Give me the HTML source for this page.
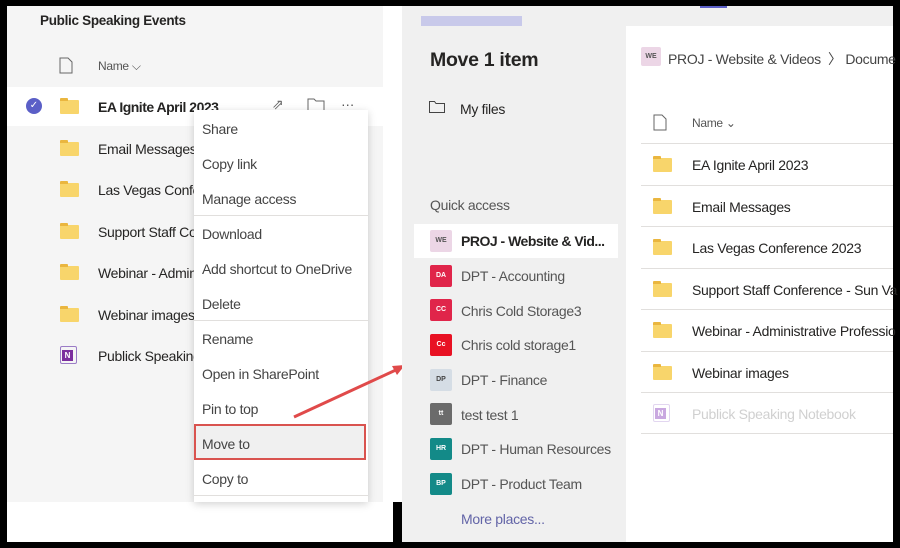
<!DOCTYPE html>
<html><head><style>
*{margin:0;padding:0;box-sizing:border-box}
body{width:900px;height:548px;background:#000;position:relative;overflow:hidden;font-family:"Liberation Sans",sans-serif;color:#252423}
.a{position:absolute}
.t{position:absolute;font-size:14px;white-space:nowrap;line-height:16px;letter-spacing:-0.3px}
.fold{position:absolute;width:19px;height:14px;background:#f8d56b;border-radius:1px}
.fold:before{content:"";position:absolute;left:0;top:-2px;width:8px;height:3px;background:#eab63f;border-radius:1px 1px 0 0}
.ic{position:absolute;width:22px;height:22px;border-radius:2px;font-size:7px;color:#fff;text-align:center;line-height:22px;font-weight:bold}
.mi{position:absolute;left:8px;font-size:14px;color:#444;letter-spacing:-0.3px}
.hl{position:absolute;height:1px;background:#e1dfdd}
</style></head><body>
<div class="a" style="left:7px;top:6px;width:376px;height:496px;background:#f5f5f5"></div>
<div class="a" style="left:7px;top:502px;width:386px;height:40px;background:#fff"></div>
<div class="a" style="left:383px;top:6px;width:19px;height:496px;background:#fff"></div>
<div class="t" style="left:40px;top:13px;font-weight:bold;font-size:13.5px">Public Speaking Events</div>
<svg class="a" style="left:59px;top:57px" width="14" height="17"><path d="M1 1h8l4 4v11H1z" fill="none" stroke="#666"/></svg>
<div class="t" style="left:98px;top:58px;font-size:12px;color:#555">Name ⌵</div>
<div class="a" style="left:7px;top:87px;width:376px;height:39px;background:#fff"></div>
<div class="a" style="left:26px;top:98px;width:16px;height:16px;border-radius:50%;background:#5b5fc7;color:#fff;font-size:10px;text-align:center;line-height:16px">✓</div>
<div class="fold" style="left:60px;top:100px"></div>
<div class="t" style="left:98px;top:99px;font-weight:bold;letter-spacing:-0.5px">EA Ignite April 2023</div>
<div class="t" style="left:272px;top:96px;color:#666">⇗</div>
<svg class="a" style="left:307px;top:97px" width="18" height="16"><path d="M1 2h6l2 2h8v10H1z" fill="none" stroke="#666"/></svg>
<div class="t" style="left:341px;top:96px;color:#555">···</div>
<div class="fold" style="left:60px;top:142px"></div><div class="t" style="left:98px;top:141px">Email Messages</div>
<div class="fold" style="left:60px;top:183px"></div><div class="t" style="left:98px;top:182px">Las Vegas Confe</div>
<div class="fold" style="left:60px;top:225px"></div><div class="t" style="left:98px;top:224px">Support Staff Co</div>
<div class="fold" style="left:60px;top:266px"></div><div class="t" style="left:98px;top:265px">Webinar - Admin</div>
<div class="fold" style="left:60px;top:308px"></div><div class="t" style="left:98px;top:307px">Webinar images</div>
<div class="a" style="left:60px;top:346px;width:17px;height:18px;border:1px solid #9b7cc6;border-radius:2px"><div style="width:11px;height:11px;background:#7b2d9e;color:#fff;font-size:8px;font-weight:bold;text-align:center;line-height:11px;margin:3px 0 0 1px">N</div></div>
<div class="t" style="left:98px;top:348px">Publick Speaking</div>
<div class="a" style="left:194px;top:110px;width:174px;height:392px;background:#fff;box-shadow:0 2px 8px rgba(0,0,0,.18)">
<div class="mi" style="top:11px">Share</div>
<div class="mi" style="top:46px">Copy link</div>
<div class="mi" style="top:81px">Manage access</div>
<div class="hl" style="left:0;top:105px;width:174px"></div>
<div class="mi" style="top:116px">Download</div>
<div class="mi" style="top:151px">Add shortcut to OneDrive</div>
<div class="mi" style="top:186px">Delete</div>
<div class="hl" style="left:0;top:210px;width:174px"></div>
<div class="mi" style="top:221px">Rename</div>
<div class="mi" style="top:256px">Open in SharePoint</div>
<div class="mi" style="top:291px">Pin to top</div>
<div class="a" style="left:0;top:314px;width:172px;height:36px;background:#f0f0f0;border:2px solid #d9534f"></div>
<div class="mi" style="top:326px">Move to</div>
<div class="mi" style="top:361px">Copy to</div>
<div class="hl" style="left:0;top:385px;width:174px"></div>
</div>
<svg class="a" style="left:280px;top:355px" width="140" height="70"><line x1="14" y1="62" x2="118" y2="14" stroke="#e04a4a" stroke-width="3"/><path d="M125 10l-13 1 5 9z" fill="#e04a4a"/></svg>
<div class="a" style="left:402px;top:6px;width:491px;height:20px;background:#f0f0f0"></div>
<div class="a" style="left:421px;top:16px;width:101px;height:10px;background:#c8c9ea"></div>
<div class="a" style="left:700px;top:6px;width:27px;height:2px;background:#5b5fc7"></div>
<div class="a" style="left:402px;top:26px;width:224px;height:516px;background:#f0f0f0"></div>
<div class="a" style="left:626px;top:26px;width:267px;height:516px;background:#fff"></div>
<div class="t" style="left:430px;top:48px;font-size:19.5px;line-height:24px;font-weight:bold;color:#252423">Move 1 item</div>
<svg class="a" style="left:429px;top:101px" width="16" height="12"><path d="M0.5 0.5h5l1.5 2h8.5v9H0.5z" fill="none" stroke="#444"/></svg>
<div class="t" style="left:460px;top:101px">My files</div>
<div class="t" style="left:430px;top:197px;color:#555">Quick access</div>
<div class="a" style="left:414px;top:224px;width:204px;height:34px;background:#fff"></div>
<div class="ic" style="left:430px;top:230px;background:#ecd6e6;color:#555">WE</div><div class="t" style="left:461px;top:233px;font-weight:bold;letter-spacing:-0.5px">PROJ - Website &amp; Vid...</div>
<div class="ic" style="left:430px;top:265px;background:#e0254a">DA</div><div class="t" style="left:461px;top:268px;color:#555">DPT - Accounting</div>
<div class="ic" style="left:430px;top:299px;background:#e0254a">CC</div><div class="t" style="left:461px;top:303px;color:#555">Chris Cold Storage3</div>
<div class="ic" style="left:430px;top:334px;background:#e81123">Cc</div><div class="t" style="left:461px;top:337px;color:#555">Chris cold storage1</div>
<div class="ic" style="left:430px;top:369px;background:#d5dde5;color:#444">DP</div><div class="t" style="left:461px;top:372px;color:#555">DPT - Finance</div>
<div class="ic" style="left:430px;top:403px;background:#6b6b6b">tt</div><div class="t" style="left:461px;top:407px;color:#555">test test 1</div>
<div class="ic" style="left:430px;top:438px;background:#138a88">HR</div><div class="t" style="left:461px;top:441px;color:#555">DPT - Human Resources</div>
<div class="ic" style="left:430px;top:473px;background:#138a88">BP</div><div class="t" style="left:461px;top:476px;color:#555">DPT - Product Team</div>
<div class="t" style="left:461px;top:511px;color:#6264a7">More places...</div>
<div class="ic" style="left:641px;top:47px;width:20px;height:19px;line-height:19px;background:#ecd6e6;color:#555">WE</div>
<div class="t" style="left:668px;top:51px;color:#444">PROJ - Website &amp; Videos &nbsp;〉 Docume</div>
<svg class="a" style="left:653px;top:114px" width="14" height="17"><path d="M1 1h8l4 4v11H1z" fill="none" stroke="#666"/></svg>
<div class="t" style="left:692px;top:115px;font-size:12px;color:#555">Name ⌄</div>
<div class="hl" style="left:641px;top:143px;width:252px"></div>
<div class="fold" style="left:653px;top:158px"></div><div class="t" style="left:692px;top:157px">EA Ignite April 2023</div><div class="hl" style="left:641px;top:185px;width:252px"></div>
<div class="fold" style="left:653px;top:200px"></div><div class="t" style="left:692px;top:199px">Email Messages</div><div class="hl" style="left:641px;top:226px;width:252px"></div>
<div class="fold" style="left:653px;top:241px"></div><div class="t" style="left:692px;top:240px">Las Vegas Conference 2023</div><div class="hl" style="left:641px;top:268px;width:252px"></div>
<div class="fold" style="left:653px;top:283px"></div><div class="t" style="left:692px;top:282px">Support Staff Conference - Sun Va</div><div class="hl" style="left:641px;top:309px;width:252px"></div>
<div class="fold" style="left:653px;top:324px"></div><div class="t" style="left:692px;top:323px">Webinar - Administrative Professio</div><div class="hl" style="left:641px;top:351px;width:252px"></div>
<div class="fold" style="left:653px;top:366px"></div><div class="t" style="left:692px;top:365px">Webinar images</div><div class="hl" style="left:641px;top:392px;width:252px"></div>
<div class="a" style="left:653px;top:404px;width:17px;height:18px;border:1px solid #e2d6f0;border-radius:2px"><div style="width:11px;height:11px;background:#c9a8e0;color:#fff;font-size:8px;font-weight:bold;text-align:center;line-height:11px;margin:3px 0 0 1px">N</div></div>
<div class="t" style="left:692px;top:406px;color:#d0d0d0">Publick Speaking Notebook</div><div class="hl" style="left:641px;top:433px;width:252px"></div>
</body></html>
